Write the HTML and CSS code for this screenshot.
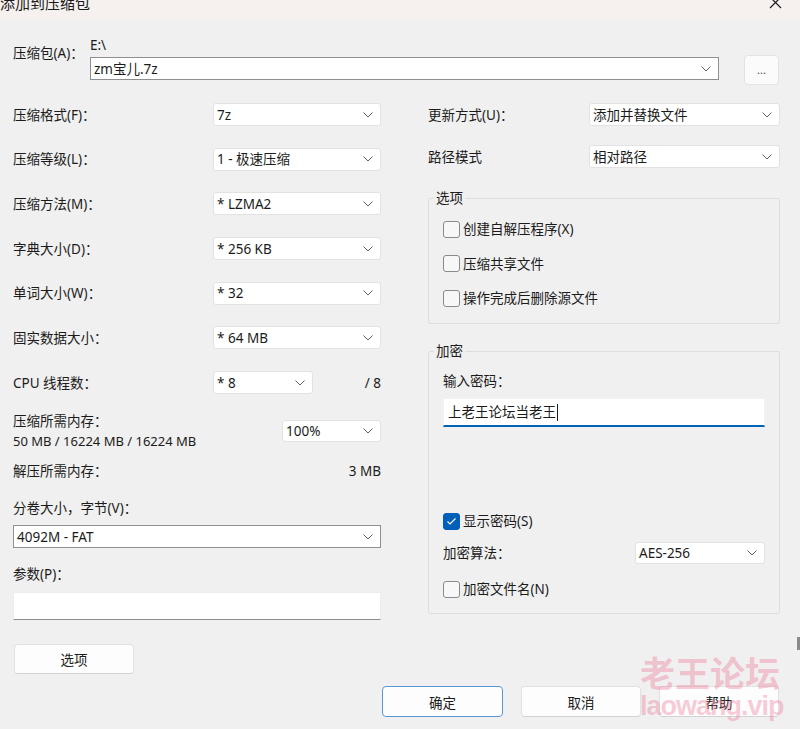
FILE: index.html
```html
<!DOCTYPE html>
<html lang="zh-CN">
<head>
<meta charset="utf-8">
<title>添加到压缩包</title>
<link rel="stylesheet" href="styles.css">
</head>
<body>
<div class="window">
  <div class="titlebar">
    <span class="title">添加到压缩包</span>
    <svg class="close" width="13" height="13" viewBox="0 0 13 13"><path d="M1 1 L12 12 M12 1 L1 12" stroke="#1a1a1a" stroke-width="1.2" fill="none"/></svg>
  </div>

  <div class="content">
    <div class="archive-row">
      <span class="archive-label">压缩包(A)：</span>
      <div class="archive-field">
        <div class="path">E:\</div>
        <div class="combo edit">
          <span>zm宝儿.7z</span>
          <svg class="chev" width="10" height="6" viewBox="0 0 10 6"><polyline points="0.5,0.5 5,5 9.5,0.5" fill="none" stroke="#606060" stroke-width="1"/></svg>
        </div>
      </div>
      <button class="browse">...</button>
    </div>

    <div class="columns">
      <div class="col left">
        <div class="rows">
          <div class="row"><span class="lbl">压缩格式(F)：</span><div class="combo"><span>7z</span><svg class="chev" width="10" height="6" viewBox="0 0 10 6"><polyline points="0.5,0.5 5,5 9.5,0.5" fill="none" stroke="#606060" stroke-width="1"/></svg></div></div>
          <div class="row"><span class="lbl">压缩等级(L)：</span><div class="combo"><span>1 - 极速压缩</span><svg class="chev" width="10" height="6" viewBox="0 0 10 6"><polyline points="0.5,0.5 5,5 9.5,0.5" fill="none" stroke="#606060" stroke-width="1"/></svg></div></div>
          <div class="row"><span class="lbl">压缩方法(M)：</span><div class="combo"><span>* LZMA2</span><svg class="chev" width="10" height="6" viewBox="0 0 10 6"><polyline points="0.5,0.5 5,5 9.5,0.5" fill="none" stroke="#606060" stroke-width="1"/></svg></div></div>
          <div class="row"><span class="lbl">字典大小(D)：</span><div class="combo"><span>* 256 KB</span><svg class="chev" width="10" height="6" viewBox="0 0 10 6"><polyline points="0.5,0.5 5,5 9.5,0.5" fill="none" stroke="#606060" stroke-width="1"/></svg></div></div>
          <div class="row"><span class="lbl">单词大小(W)：</span><div class="combo"><span>* 32</span><svg class="chev" width="10" height="6" viewBox="0 0 10 6"><polyline points="0.5,0.5 5,5 9.5,0.5" fill="none" stroke="#606060" stroke-width="1"/></svg></div></div>
          <div class="row"><span class="lbl">固实数据大小：</span><div class="combo"><span>* 64 MB</span><svg class="chev" width="10" height="6" viewBox="0 0 10 6"><polyline points="0.5,0.5 5,5 9.5,0.5" fill="none" stroke="#606060" stroke-width="1"/></svg></div></div>
          <div class="row"><span class="lbl">CPU 线程数：</span><div class="combo cpu"><span>* 8</span><svg class="chev" width="10" height="6" viewBox="0 0 10 6"><polyline points="0.5,0.5 5,5 9.5,0.5" fill="none" stroke="#606060" stroke-width="1"/></svg></div><span class="ratio">/ 8</span></div>
        </div>

        <div class="mem">
          <div class="mem-text">
            <div>压缩所需内存：</div>
            <div class="latin">50 MB / 16224 MB / 16224 MB</div>
          </div>
          <div class="combo pct"><span>100%</span><svg class="chev" width="10" height="6" viewBox="0 0 10 6"><polyline points="0.5,0.5 5,5 9.5,0.5" fill="none" stroke="#606060" stroke-width="1"/></svg></div>
        </div>

        <div class="decomp"><span>解压所需内存：</span><span>3 MB</span></div>

        <div class="vol-label">分卷大小，字节(V)：</div>
        <div class="combo edit full"><span>4092M - FAT</span><svg class="chev" width="10" height="6" viewBox="0 0 10 6"><polyline points="0.5,0.5 5,5 9.5,0.5" fill="none" stroke="#606060" stroke-width="1"/></svg></div>

        <div class="param-label">参数(P)：</div>
        <div class="param-input"></div>

        <button class="btn opt">选项</button>
      </div>

      <div class="col right">
        <div class="rrow"><span class="rlbl">更新方式(U)：</span><div class="combo rcombo"><span>添加并替换文件</span><svg class="chev" width="10" height="6" viewBox="0 0 10 6"><polyline points="0.5,0.5 5,5 9.5,0.5" fill="none" stroke="#606060" stroke-width="1"/></svg></div></div>
        <div class="rrow second"><span class="rlbl">路径模式</span><div class="combo rcombo"><span>相对路径</span><svg class="chev" width="10" height="6" viewBox="0 0 10 6"><polyline points="0.5,0.5 5,5 9.5,0.5" fill="none" stroke="#606060" stroke-width="1"/></svg></div></div>

        <fieldset class="group options">
          <legend>选项</legend>
          <div class="check first"><span class="box"></span><span>创建自解压程序(X)</span></div>
          <div class="check"><span class="box"></span><span>压缩共享文件</span></div>
          <div class="check"><span class="box"></span><span>操作完成后删除源文件</span></div>
        </fieldset>

        <fieldset class="group encrypt">
          <legend>加密</legend>
          <div class="pw-label">输入密码：</div>
          <div class="pw-input"><span>上老王论坛当老王</span><span class="caret"></span></div>
          <div class="check show"><span class="box checked"><svg width="11" height="9" viewBox="0 0 11 9"><polyline points="1.5,4.5 4,7 9.5,1.5" fill="none" stroke="#ffffff" stroke-width="1.2"/></svg></span><span>显示密码(S)</span></div>
          <div class="algo"><span>加密算法：</span><div class="combo acombo"><span>AES-256</span><svg class="chev" width="10" height="6" viewBox="0 0 10 6"><polyline points="0.5,0.5 5,5 9.5,0.5" fill="none" stroke="#606060" stroke-width="1"/></svg></div></div>
          <div class="check names"><span class="box"></span><span>加密文件名(N)</span></div>
        </fieldset>
      </div>
    </div>

    <div class="footer">
      <button class="btn ok">确定</button>
      <button class="btn">取消</button>
      <button class="btn">帮助</button>
    </div>
  </div>

  <div class="watermark">
    <div class="wm-cn">老王论坛</div>
    <div class="wm-en">laowang.vip</div>
  </div>
  <div class="edge-mark"></div>
</div>
</body>
</html>
```

FILE: styles.css
```css
html, body {
  margin: 0;
  padding: 0;
}
body {
  width: 800px;
  height: 729px;
  overflow: hidden;
  background: #f0f0f0;
  font-family: "Noto Sans", "Noto Sans CJK SC", sans-serif;
  font-size: 13.5px;
  line-height: 20px;
  color: #1b1b1b;
}
.window {
  position: relative;
  width: 800px;
  height: 729px;
}
.titlebar {
  height: 19px;
  background: #f6f1ef;
  display: flex;
  justify-content: space-between;
  align-items: flex-start;
  overflow: hidden;
}
.title {
  font-size: 15px;
  line-height: 15px;
  margin-top: -4px;
  margin-left: 0;
  color: #1a1a1a;
}
.close {
  margin-top: -4px;
  margin-right: 18px;
}
.content {
  padding: 16px 20px 0 13px;
}
.archive-row {
  display: flex;
  align-items: flex-start;
}
.archive-label {
  width: 77px;
  padding-top: 8px;
}
.archive-field {
  width: 629px;
}
.path {
  height: 20px;
  line-height: 20px;
  margin-bottom: 2px;
}
.combo {
  box-sizing: border-box;
  height: 23px;
  background: #ffffff;
  border: 1px solid #e2e2e2;
  border-radius: 3px;
  display: flex;
  align-items: center;
  justify-content: space-between;
  padding: 0 7px 0 3px;
  white-space: pre;
}
.combo.edit {
  border: 1px solid #8f8f8f;
  border-radius: 0;
}
.chev {
  flex: none;
}
.browse {
  box-sizing: border-box;
  margin-left: 25px;
  margin-top: 20px;
  width: 35px;
  height: 30px;
  background: #fbfbfb;
  border: 1px solid #e3e3e3;
  border-radius: 4px;
  font-family: inherit;
  font-size: 11px;
  color: #444;
  padding: 0;
  line-height: 26px;
}
.columns {
  display: grid;
  grid-template-columns: 368px 352px;
  column-gap: 47px;
  align-items: start;
  margin-top: 18px;
}
.rows {
  display: flex;
  flex-direction: column;
  gap: 21.7px;
}
.row {
  display: flex;
  align-items: center;
  height: 23px;
}
.lbl {
  width: 200px;
  flex: none;
}
.row .combo {
  width: 168px;
}
.row .combo.cpu {
  width: 100px;
}
.ratio {
  flex: 1;
  text-align: right;
}
.mem {
  margin-top: 17px;
  display: flex;
  justify-content: space-between;
  align-items: center;
}
.latin {
  font-size: 13px;
}
.combo.pct {
  width: 99px;
  height: 22px;
}
.decomp {
  margin-top: 10px;
  display: flex;
  justify-content: space-between;
}
.vol-label {
  margin-top: 17px;
}
.combo.full {
  margin-top: 7px;
  width: 368px;
}
.param-label {
  margin-top: 16px;
}
.param-input {
  box-sizing: border-box;
  margin-top: 8px;
  height: 28px;
  background: #ffffff;
  border: 1px solid #ececec;
  border-bottom: 1px solid #8d8d8d;
  border-radius: 2px 2px 0 0;
}
.btn {
  box-sizing: border-box;
  width: 120px;
  height: 31px;
  background: #fdfdfd;
  border: 1px solid #e1e1e1;
  border-bottom-color: #d2d2d2;
  border-radius: 4px;
  font-family: inherit;
  font-size: 13.5px;
  color: #1b1b1b;
  padding: 0;
}
.btn.opt {
  display: block;
  margin-top: 24px;
  margin-left: 1px;
  height: 30px;
}
.footer {
  display: flex;
  justify-content: flex-end;
  gap: 18px;
  margin-top: 12px;
  margin-right: 1px;
}
.btn.ok {
  width: 121px;
  border: 1px solid #5a95d6;
}

/* right column */
.rrow {
  display: flex;
  align-items: center;
  height: 23px;
}
.rrow.second {
  margin-top: 19px;
}
.rlbl {
  width: 161px;
  flex: none;
}
.rcombo {
  width: 191px;
}
.group {
  margin: 0;
  padding: 0 14px 15px 14px;
  border: 1px solid #dedede;
  border-radius: 2px;
  min-width: 0;
}
.group legend {
  padding: 0 2px;
  margin-left: -9px;
  line-height: 18px;
  font-size: 13.5px;
}
.group.options {
  margin-top: 21px;
}
.group.encrypt {
  margin-top: 18px;
  padding-bottom: 14px;
}
.check {
  display: flex;
  align-items: center;
  height: 20px;
  gap: 3px;
  margin-top: 14.5px;
}
.check.first {
  margin-top: 12px;
}
.box {
  box-sizing: border-box;
  width: 17px;
  height: 17px;
  border: 1px solid #8a8a8a;
  border-radius: 3px;
  background: #f7f7f7;
  display: flex;
  align-items: center;
  justify-content: center;
  flex: none;
}
.box.checked {
  background: #005fb8;
  border-color: #005fb8;
}
.pw-label {
  margin-top: 11px;
}
.pw-input {
  box-sizing: border-box;
  margin-top: 7px;
  height: 29px;
  background: #ffffff;
  border: 1px solid #f2f2f2;
  border-bottom: 2px solid #0063b8;
  padding-left: 4px;
  display: flex;
  align-items: center;
  font-size: 13.5px;
}
.caret {
  width: 1px;
  height: 17px;
  background: #1b1b1b;
  margin-left: 1px;
}
.check.show {
  margin-top: 84px;
}
.algo {
  margin-top: 11px;
  display: flex;
  align-items: center;
  justify-content: space-between;
  height: 22px;
}
.acombo {
  width: 130px;
  height: 22px;
}
.check.names {
  margin-top: 15px;
}

/* overlays */
.watermark {
  position: absolute;
  left: 640px;
  top: 651px;
  color: rgba(238, 120, 150, 0.38);
  font-weight: 700;
  pointer-events: none;
}
.wm-cn {
  font-family: "Noto Sans CJK SC", sans-serif;
  font-size: 35px;
  line-height: 42px;
  letter-spacing: 0px;
}
.wm-en {
  font-family: "Liberation Sans", sans-serif;
  font-size: 27px;
  line-height: 30px;
  letter-spacing: -1px;
  margin-top: -2px;
}
.edge-mark {
  position: absolute;
  right: 0;
  top: 637px;
  width: 3px;
  height: 13px;
  background: #8a8a8a;
}
```
